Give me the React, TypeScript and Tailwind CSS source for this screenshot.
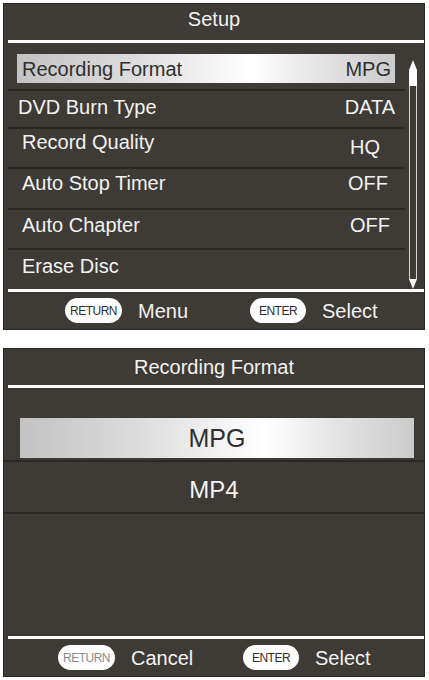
import React from "react";

type Row = {
  label: string;
  value?: string;
  h: string;
  labelCls: string;
  valueCls: string;
  last?: boolean;
};

const rows: Row[] = [
  { label: "DVD Burn Type", value: "DATA", h: "h-[36px]", labelCls: "ml-[10px] mt-[6px]", valueCls: "mr-[10px] mt-[6px]" },
  { label: "Record Quality", value: "HQ", h: "h-[38px]", labelCls: "ml-[14px] mt-[3px]", valueCls: "mr-[25px] mt-[8px]" },
  { label: "Auto Stop Timer", value: "OFF", h: "h-[39px]", labelCls: "ml-[14px] mt-[4px]", valueCls: "mr-[17px] mt-[4px]" },
  { label: "Auto Chapter", value: "OFF", h: "h-[38px]", labelCls: "ml-[14px] mt-[5px]", valueCls: "mr-[15px] mt-[5px]" },
  { label: "Erase Disc", h: "h-[39px]", labelCls: "ml-[14px] mt-[6px]", valueCls: "", last: true },
];

const highlight =
  "bg-[linear-gradient(90deg,#c2c2c2_0%,#dcdcdc_30%,#ffffff_62%,#e4e4e4_80%,#cbcbcb_100%)]";

function Pill({ label, dim }: { label: string; dim?: boolean }) {
  return (
    <div
      className={`flex h-[25px] items-center justify-center rounded-full bg-white text-[12px] leading-none tracking-[-0.5px] ${
        dim ? "text-[#8a8a8a]" : "text-[#2e2e2e]"
      } ${label === "RETURN" ? "w-[57px]" : "w-[56px]"}`}
    >
      {label}
    </div>
  );
}

function Footer({ left, pad }: { left: string; pad: string }) {
  return (
    <div className={`flex h-[37px] items-center ${pad}`}>
      <div className="flex w-[185px] items-center">
        <Pill label="RETURN" dim={left === "Cancel"} />
        <span className="ml-[16px] text-[20px] leading-none">{left}</span>
      </div>
      <div className="flex items-center">
        <Pill label="ENTER" />
        <span className="ml-[16px] text-[20px] leading-none">Select</span>
      </div>
    </div>
  );
}

function ScrollBar() {
  return (
    <div className="ml-[4px] mt-[17px] flex w-[8px] flex-col">
      <svg className="shrink-0" width="8" height="10" viewBox="0 0 8 10">
        <polygon points="4,0 8,10 0,10" fill="#ffffff" />
      </svg>
      <div className="h-[16px] shrink-0 bg-white" />
      <div className="flex-1 border-x border-[#d6d6d6]" />
      <svg className="shrink-0" width="8" height="10" viewBox="0 0 8 10">
        <polygon points="0,0 8,0 4,10" fill="#ffffff" />
      </svg>
    </div>
  );
}

export default function App() {
  return (
    <div className="flex h-[680px] w-[429px] flex-col bg-white px-[3px] pt-[3px] font-[family-name:'Liberation_Sans',Arial,sans-serif] text-[#f2f2f2]">
      <div className="flex h-[327px] w-[422px] flex-col border border-[#2a2724] bg-[#3e3a35]">
        <div className="flex h-[36px] items-center justify-center pb-[6px] text-[20px] leading-none">Setup</div>
        <div className="ml-[4px] h-[3px] bg-white" />
        <div className="flex h-[246px]">
          <div className="ml-[4px] flex w-[397px] flex-col">
            <div className="border-b-2 border-[#2a2724] pb-[6px] pt-[11px]">
              <div className={`ml-[9px] flex h-[29px] w-[378px] items-center justify-between px-[5px] text-[20px] leading-none text-[#2f2f2f] ${highlight}`}>
                <span>Recording Format</span>
                <span className="mr-[-1px]">MPG</span>
              </div>
            </div>
            {rows.map((r) => (
              <div
                key={r.label}
                className={`box-content flex items-start justify-between text-[20px] leading-none ${r.h} ${
                  r.last ? "" : "border-b-2 border-[#2a2724]"
                }`}
              >
                <span className={r.labelCls}>{r.label}</span>
                {r.value && <span className={r.valueCls}>{r.value}</span>}
              </div>
            ))}
          </div>
          <ScrollBar />
        </div>
        <div className="ml-[4px] h-[3px] bg-white" />
        <Footer left="Menu" pad="pl-[61px]" />
      </div>

      <div className="mt-[18px] flex h-[329px] w-[422px] flex-col border border-[#2a2724] bg-[#3e3a35]">
        <div className="flex h-[36px] items-center justify-center text-[20px] leading-none">Recording Format</div>
        <div className="ml-[4px] h-[3px] bg-white" />
        <div className="flex h-[248px] flex-col pt-[30px]">
          <div className={`ml-[16px] flex h-[40px] w-[394px] items-center justify-center text-[25px] leading-none text-[#2f2f2f] ${highlight}`}>
            MPG
          </div>
          <div className="mt-[2px] border-y-2 border-[#2a2724]">
            <div className="flex h-[50px] items-center justify-center pt-[6px] text-[24px] leading-none">MP4</div>
          </div>
        </div>
        <div className="ml-[4px] h-[3px] bg-white" />
        <Footer left="Cancel" pad="pl-[54px]" />
      </div>
    </div>
  );
}
